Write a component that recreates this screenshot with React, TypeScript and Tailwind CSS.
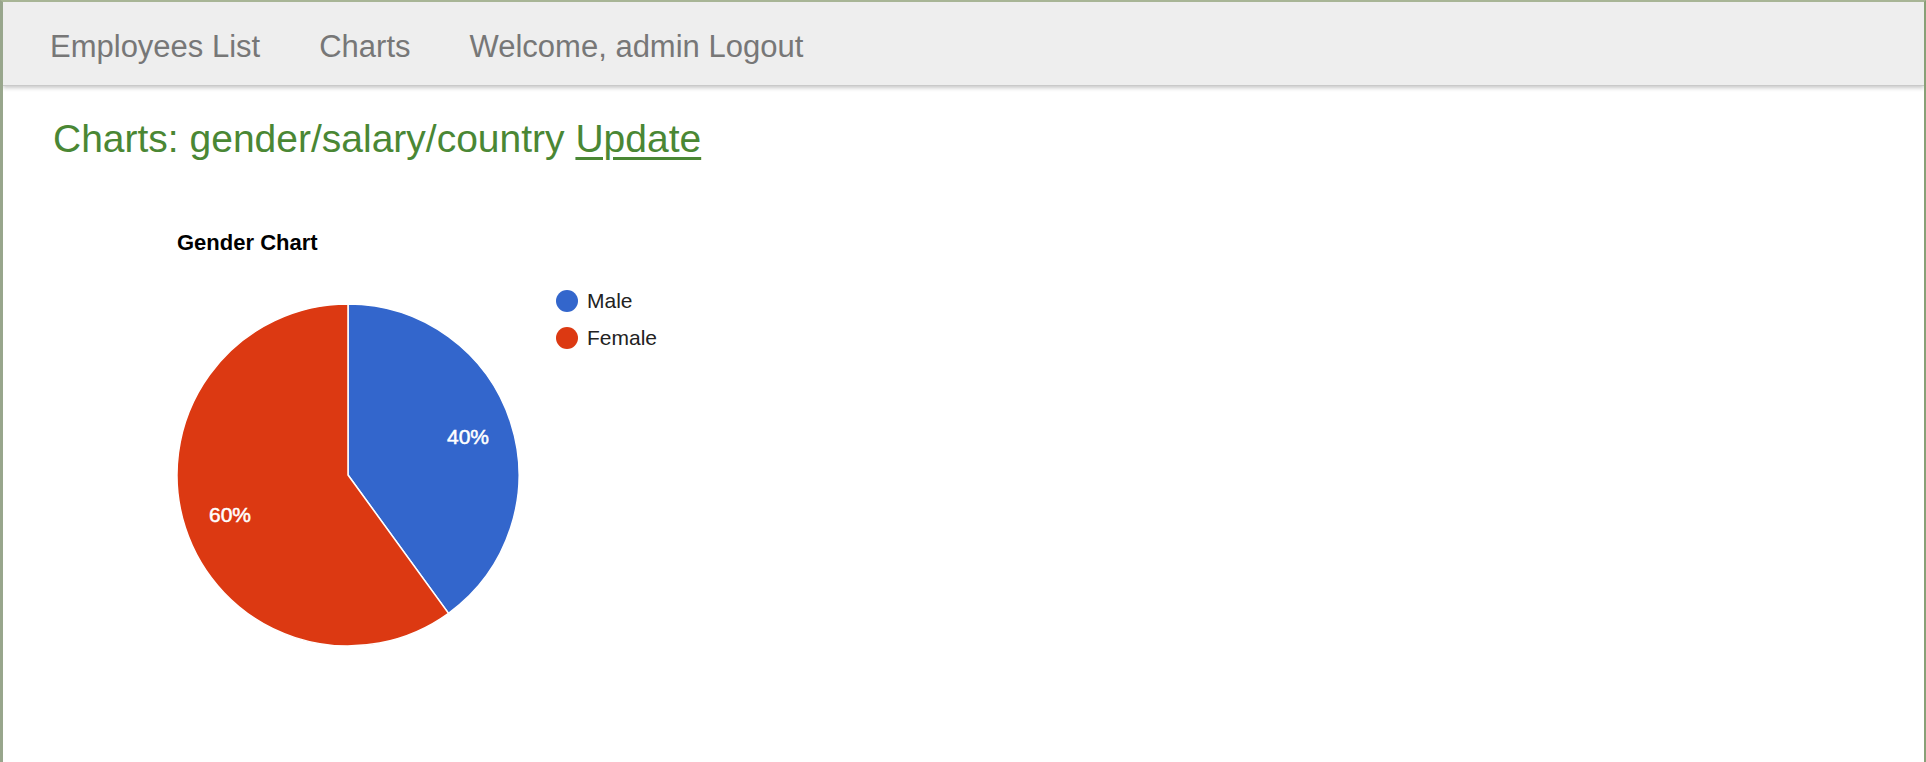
import React from "react";

const cx = 345;
const cy = 306;
const r = 171;
const ang = (144 * Math.PI) / 180;
const ex = cx + r * Math.sin(ang);
const ey = cy - r * Math.cos(ang);

export default function App() {
  return (
    <div className="h-[762px] w-[1926px] overflow-hidden bg-white border-l-[3px] border-t-2 border-r-2 border-l-[#98a68c] border-t-[#a8b596] border-r-[#88a077] font-['Liberation_Sans',Arial,sans-serif]">
      <nav className="relative z-10 flex h-[84px] items-center bg-[#eeeeee] pl-[17px] pt-[8px] shadow-[0_2px_4px_rgba(0,0,0,0.22)] border-b border-[#c9c9c9]">
        <a className="px-[30px] text-[31px] leading-normal text-[#777777]">Employees List</a>
        <a className="px-[29px] text-[31px] leading-normal text-[#777777]">Charts</a>
        <span className="px-[30px] text-[31px] leading-normal text-[#777777]">Welcome, admin Logout</span>
      </nav>
      <div className="pl-[50px] pt-[32px]">
        <h1 className="text-[39px] leading-[1.1] text-[#4a8734]">
          Charts: gender/salary/country{" "}
          <a className="underline decoration-[3px] underline-offset-[5px]">Update</a>
        </h1>
      </div>
      <svg
        width="900"
        height="560"
        className="mt-[8px] block"
        style={{ fontFamily: "'Liberation Sans', Arial, sans-serif" }}
      >
        <text x="174" y="81" fontSize="22" fontWeight="bold" fill="#000">
          Gender Chart
        </text>
        <path
          d={`M${cx},${cy} L${cx},${cy - r} A${r},${r} 0 0 1 ${ex},${ey} Z`}
          fill="#3366cc"
          stroke="#ffffff"
          strokeWidth="1.5"
        />
        <path
          d={`M${cx},${cy} L${ex},${ey} A${r},${r} 0 1 1 ${cx},${cy - r} Z`}
          fill="#dc3912"
          stroke="#ffffff"
          strokeWidth="1.5"
        />
        <text x="465" y="275" fontSize="21" fill="#ffffff" stroke="#ffffff" strokeWidth="0.5" textAnchor="middle">
          40%
        </text>
        <text x="227" y="353" fontSize="21" fill="#ffffff" stroke="#ffffff" strokeWidth="0.5" textAnchor="middle">
          60%
        </text>
        <circle cx="564" cy="132" r="11" fill="#3366cc" />
        <text x="584" y="139" fontSize="21" fill="#222222">
          Male
        </text>
        <circle cx="564" cy="169" r="11" fill="#dc3912" />
        <text x="584" y="176" fontSize="21" fill="#222222">
          Female
        </text>
      </svg>
    </div>
  );
}
